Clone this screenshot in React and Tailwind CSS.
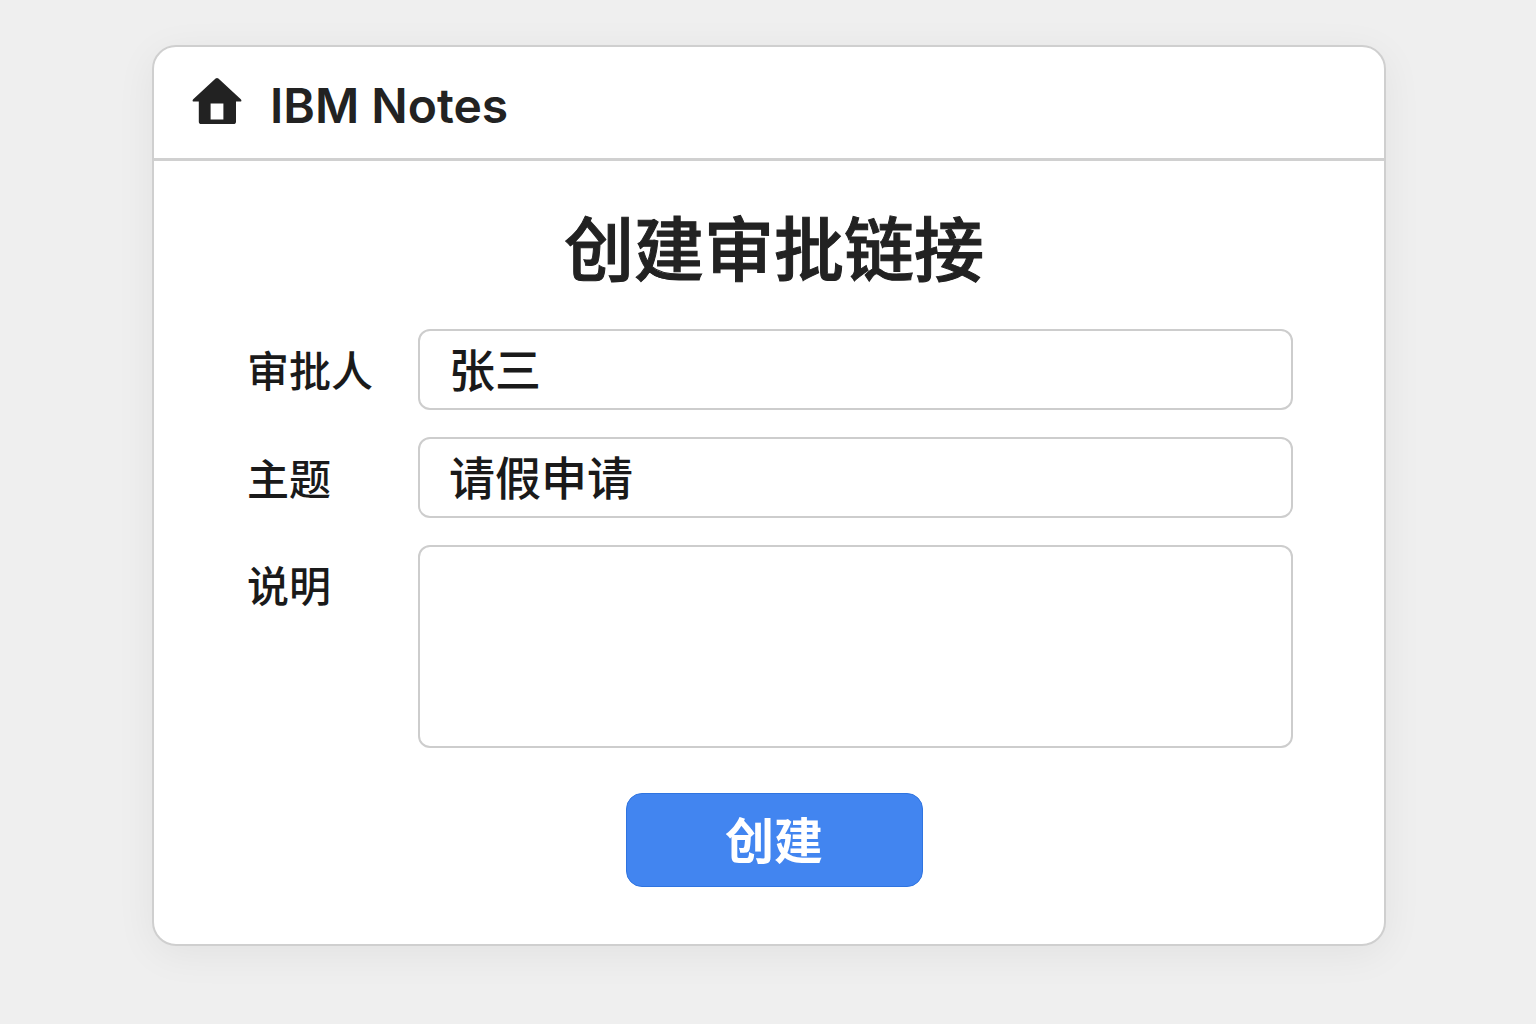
import { useState } from 'react'

const fieldClass =
  'block w-full min-w-0 rounded-xl border-2 border-[#cdcdcd] bg-white px-[29px] text-[46px] font-medium text-[#1a1a1a] outline-none focus:border-[#4285f0]'
const labelClass = 'text-[42px] leading-[60px] font-medium whitespace-nowrap text-[#1a1a1a]'

function HomeIcon() {
  return (
    <svg className="mt-[7px] h-[48px] w-[50px] shrink-0" viewBox="0 0 50 48" fill="#222222" aria-hidden="true">
      <path
        fillRule="evenodd"
        d="M23.6 1.6Q25 0.4 26.4 1.6L48.8 22.3Q50.4 24.4 48 24.6H44V44.4Q44 47 41.4 47H9.4Q6.8 47 6.8 44.4V24.6H2Q-0.4 24.4 1.2 22.3ZM18.6 26.5V42.6H31.4V26.5Z"
      />
    </svg>
  )
}

export default function App() {
  const [form, setForm] = useState({ approver: '张三', subject: '请假申请', note: '' })

  const update = (key) => (e) => setForm({ ...form, [key]: e.target.value })

  return (
    <div className="min-h-screen bg-[#efefef] pt-[45px] pr-[150px] pb-[78px] pl-[152px] font-['Inter','Noto_Sans_CJK_SC',sans-serif] text-[#222222]">
      <div className="rounded-3xl border-2 border-[#cfcfcf] bg-white shadow-[0_8px_40px_rgba(0,0,0,0.06)]">
        <header className="flex items-start gap-7 border-b-3 border-[#d0d0d0] px-[38px] pt-[23px] pb-4">
          <HomeIcon />
          <span className="text-[48px] leading-[72px] font-semibold">IBM Notes</span>
        </header>

        <main className="pt-[40px] pr-[91px] pb-[57px] pl-[93px]">
          <h1 className="pl-2 text-center text-[70px] leading-[100px] font-medium [-webkit-text-stroke:1px_#222222]">
            创建审批链接
          </h1>

          <form className="mt-7" onSubmit={(e) => e.preventDefault()}>
            <div className="grid grid-cols-[171px_1fr] items-center gap-y-[27px]">
              <label htmlFor="approver" className={`${labelClass} pt-1`}>审批人</label>
              <input id="approver" type="text" className={`${fieldClass} h-[81px] pb-1.5`} value={form.approver} onChange={update('approver')} />

              <label htmlFor="subject" className={`${labelClass} pt-1`}>主题</label>
              <input id="subject" type="text" className={`${fieldClass} h-[81px] pb-1.5`} value={form.subject} onChange={update('subject')} />

              <label htmlFor="note" className={`${labelClass} self-start pt-3`}>说明</label>
              <textarea id="note" className={`${fieldClass} h-[203px] resize-none py-3`} value={form.note} onChange={update('note')} />
            </div>

            <div className="mt-[45px] flex justify-center pl-2">
              <button
                type="submit"
                className="h-[94px] w-[297px] rounded-2xl border border-[#2f74e0] bg-[#4285f0] pt-1 text-[49px] font-bold text-white hover:bg-[#3a7be4]"
              >
                创建
              </button>
            </div>
          </form>
        </main>
      </div>
    </div>
  )
}
